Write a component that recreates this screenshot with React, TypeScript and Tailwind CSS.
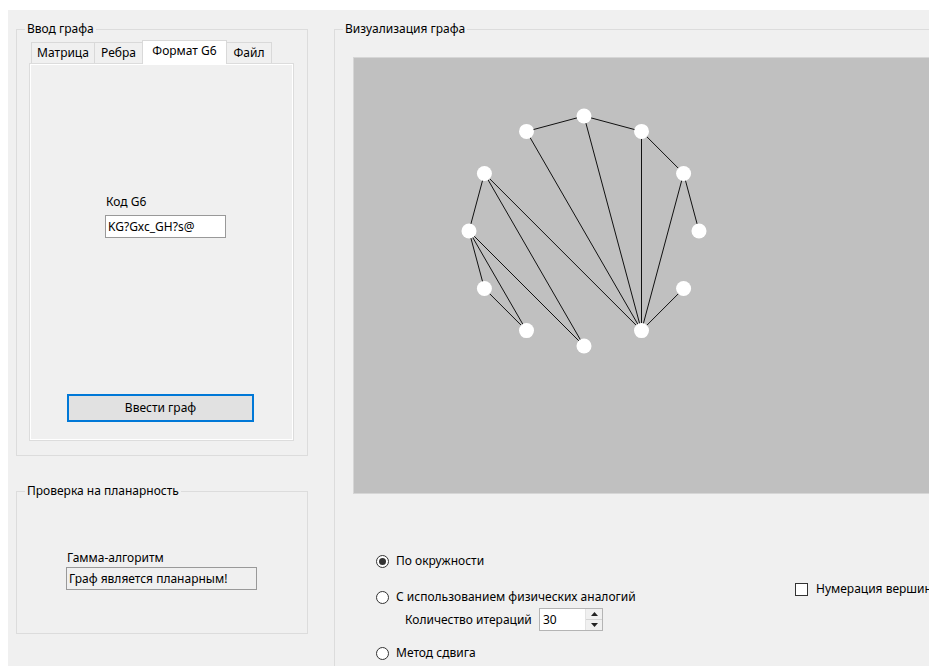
import React from "react"

type Pt = [number, number]

// 12 vertices on a circle, numbered clockwise from the rightmost one
const CX = 230
const CY = 173
const R = 115
const nodes: Pt[] = Array.from({ length: 12 }, (_, k) => {
  const a = (k * Math.PI) / 6
  return [CX + R * Math.cos(a), CY + R * Math.sin(a)]
})

const edges: Pt[] = [
  [8, 9], [9, 10], [10, 11], [11, 0], [11, 2], [10, 2], [9, 2], [8, 2],
  [7, 2], [7, 3], [7, 6], [6, 5], [6, 4], [6, 3], [5, 4], [1, 2],
]

function GraphCanvas() {
  return (
    <svg width="600" height="435" className="block">
      {edges.map(([a, b], i) => (
        <line
          key={i}
          x1={nodes[a][0]}
          y1={nodes[a][1]}
          x2={nodes[b][0]}
          y2={nodes[b][1]}
          stroke="#111"
          strokeWidth="1"
        />
      ))}
      {nodes.map(([x, y], i) => (
        <circle key={i} cx={x} cy={y} r="7.5" fill="#fff" />
      ))}
    </svg>
  )
}

function Tab({ label, active, width }: { label: string; active?: boolean; width: string }) {
  if (active) {
    return (
      <div
        className={`${width} relative z-10 -ml-px -mb-px flex h-[24px] items-start justify-center border border-b-0 border-[#d9d9d9] bg-white pt-[2px]`}
      >
        {label}
      </div>
    )
  }
  return (
    <div
      className={`${width} -ml-px flex h-[21px] items-center justify-center border border-b-0 border-[#d9d9d9] bg-[#f0f0f0]`}
    >
      {label}
    </div>
  )
}

function Radio({ label, checked }: { label: string; checked?: boolean }) {
  return (
    <div className="flex h-[16px] items-center gap-[7px]">
      <span className="flex h-[13px] w-[13px] items-center justify-center rounded-full border border-[#333] bg-white">
        {checked && <span className="h-[7px] w-[7px] rounded-full bg-[#333]" />}
      </span>
      <span>{label}</span>
    </div>
  )
}

function SpinBox({ value }: { value: number }) {
  return (
    <div className="flex h-[23px] w-[64px] border border-[#b4b4b4] bg-white">
      <span className="flex-1 pl-[3px] leading-[21px]">{value}</span>
      <div className="flex w-[17px] flex-col border-l border-[#e3e3e3] bg-[#f0f0f0]">
        <div className="flex flex-1 items-center justify-center border-b border-[#d4d4d4]">
          <svg width="7" height="4" viewBox="0 0 7 4">
            <path d="M0 4 L3.5 0 L7 4 Z" fill="#222" />
          </svg>
        </div>
        <div className="flex flex-1 items-center justify-center">
          <svg width="7" height="4" viewBox="0 0 7 4">
            <path d="M0 0 L3.5 4 L7 0 Z" fill="#222" />
          </svg>
        </div>
      </div>
    </div>
  )
}

export default function App() {
  return (
    <div
      className="h-[666px] w-[929px] overflow-hidden bg-white pl-[8px] pt-[10px] text-[12px] leading-[16px] text-black"
      style={{ fontFamily: '"Noto Sans", "Open Sans", sans-serif' }}
    >
      <div className="flex h-[656px] bg-[#f0f0f0]">
        {/* left side: input and planarity check */}
        <div className="flex flex-col pl-[8px] pt-[11px]">
          <fieldset className="h-[435px] w-[292px] border border-[#dcdcdc]">
            <legend className="ml-[8px] px-[2px]">Ввод графа</legend>
            <div className="ml-[12px] mt-[3px] w-[265px]">
              <div className="flex h-[23px] items-end pl-[3px]">
                <Tab label="Матрица" width="w-[64px]" />
                <Tab label="Ребра" width="w-[49px]" />
                <Tab label="Формат G6" width="w-[85px]" active />
                <Tab label="Файл" width="w-[46px]" />
              </div>
              <div className="flex h-[378px] flex-col border border-[#dcdcdc] bg-[#f0f0f0] pt-[130px] shadow-[inset_1px_1px_0_#fff,inset_-1px_-1px_0_#fff]">
                <span className="ml-[76px]">Код G6</span>
                <div className="ml-[75px] mt-[5px] h-[23px] w-[121px] border border-[#999] bg-white pl-[2px] leading-[21px]">
                  KG?Gxc_GH?s@
                </div>
                <button className="ml-[37px] mt-[156px] h-[28px] w-[187px] border-2 border-[#0078d7] bg-[#e1e1e1] text-center">
                  Ввести граф
                </button>
              </div>
            </div>
          </fieldset>

          <fieldset className="mt-[27px] h-[151px] w-[292px] border border-[#dcdcdc]">
            <legend className="ml-[8px] px-[2px]">Проверка на планарность</legend>
            <div className="ml-[50px] mt-[51px]">Гамма-алгоритм</div>
            <div className="ml-[49px] mt-[1px] h-[23px] w-[191px] border border-[#999] bg-[#f0f0f0] pl-[2px] leading-[21px]">
              Граф является планарным!
            </div>
          </fieldset>
        </div>

        {/* right side: drawing and layout options */}
        <div className="pl-[26px] pt-[11px]">
          <fieldset className="h-[700px] w-[640px] border border-[#dcdcdc]">
            <legend className="ml-[8px] px-[2px]">Визуализация графа</legend>
            <div className="ml-[18px] mt-[20px] h-[437px] w-[600px] border border-[#d6d6d6] bg-[#c0c0c0]">
              <GraphCanvas />
            </div>
            <div className="ml-[41px] flex">
              <div className="flex w-[419px] flex-col pt-[59px]">
                <Radio label="По окружности" checked />
                <div className="mt-[20px]">
                  <Radio label="С использованием физических аналогий" />
                </div>
                <div className="ml-[29px] mt-[3px] flex items-center">
                  <span className="w-[134px]">Количество итераций</span>
                  <SpinBox value={30} />
                </div>
                <div className="mt-[14px]">
                  <Radio label="Метод сдвига" />
                </div>
              </div>
              <div className="pt-[87px]">
                <div className="flex h-[16px] items-center gap-[8px] whitespace-nowrap">
                  <span className="h-[13px] w-[13px] border border-[#333] bg-white" />
                  <span>Нумерация вершин</span>
                </div>
              </div>
            </div>
          </fieldset>
        </div>
      </div>
    </div>
  )
}
